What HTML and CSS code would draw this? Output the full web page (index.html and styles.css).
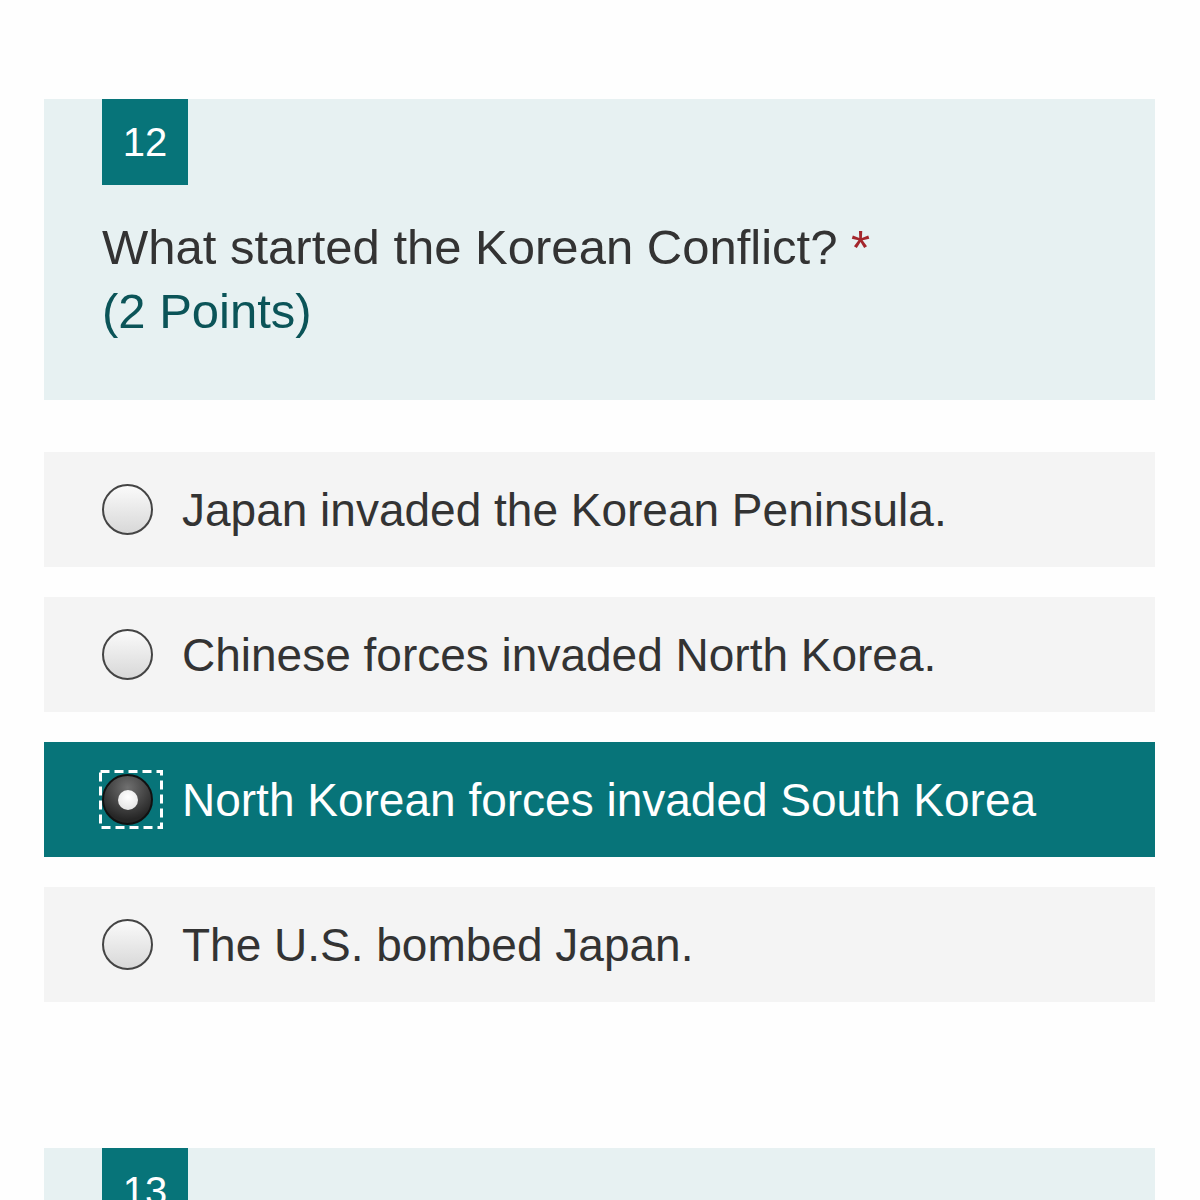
FILE: index.html
```html
<!DOCTYPE html>
<html>
<head>
<meta charset="utf-8">
<link rel="stylesheet" href="styles.css">
</head>
<body>
<div class="page">
  <section class="question">
    <div class="badge">12</div>
    <div class="title">What started the Korean Conflict? <span class="req">*</span></div>
    <div class="points">(2 Points)</div>
  </section>
  <div class="options">
    <div class="option"><span class="radio"></span><span class="label">Japan invaded the Korean Peninsula.</span></div>
    <div class="option"><span class="radio"></span><span class="label">Chinese forces invaded North Korea.</span></div>
    <div class="option selected"><span class="radio on"><span class="dot"></span><svg class="focus" width="64" height="59" viewBox="0 0 64 59"><rect x="1.5" y="1.5" width="61" height="56" fill="none" stroke="#fff" stroke-width="3" stroke-dasharray="9 5"/></svg></span><span class="label">North Korean forces invaded South Korea</span></div>
    <div class="option"><span class="radio"></span><span class="label">The U.S. bombed Japan.</span></div>
  </div>
  <section class="question next">
    <div class="badge">13</div>
  </section>
</div>
</body>
</html>
```
FILE: styles.css
```css
html, body { margin: 0; padding: 0; background: #fefefe; }
body { font-family: "Liberation Sans", Arial, sans-serif; overflow: hidden; height: 1200px; }
.page { padding: 99px 45px 0 44px; }
.question { background: #e7f1f2; padding: 0 58px 57px; }
.badge { width: 86px; height: 86px; background: #077479; color: #fff; font-size: 40px; display: flex; align-items: center; justify-content: center; }
.title { margin-top: 30px; font-size: 49px; line-height: 64px; color: #333; }
.req { color: #a4262c; }
.points { font-size: 49px; line-height: 64px; color: #0b5458; }
.options { display: flex; flex-direction: column; gap: 30px; margin-top: 52px; margin-bottom: 146px; }
.option { height: 115px; background: #f4f4f4; display: flex; align-items: center; padding-left: 58px; color: #333; font-size: 46px; }
.option.selected { background: #077479; color: #fff; }
.radio { position: relative; width: 47px; height: 47px; border: 2.5px solid #444; border-radius: 50%; background: linear-gradient(#fafafa, #d8d8d8); flex: none; margin-right: 29px; box-sizing: content-box; display: flex; align-items: center; justify-content: center; }
.radio.on { background: radial-gradient(circle at 50% 25%, #707070, #262626 75%); border-color: #111; }
.focus { position: absolute; left: -5.5px; top: -6.5px; }
.dot { width: 20px; height: 20px; border-radius: 50%; background: radial-gradient(circle at 50% 35%, #fff, #ddd); }
.label { white-space: nowrap; }
.next { height: 60px; padding-bottom: 0; }
```
